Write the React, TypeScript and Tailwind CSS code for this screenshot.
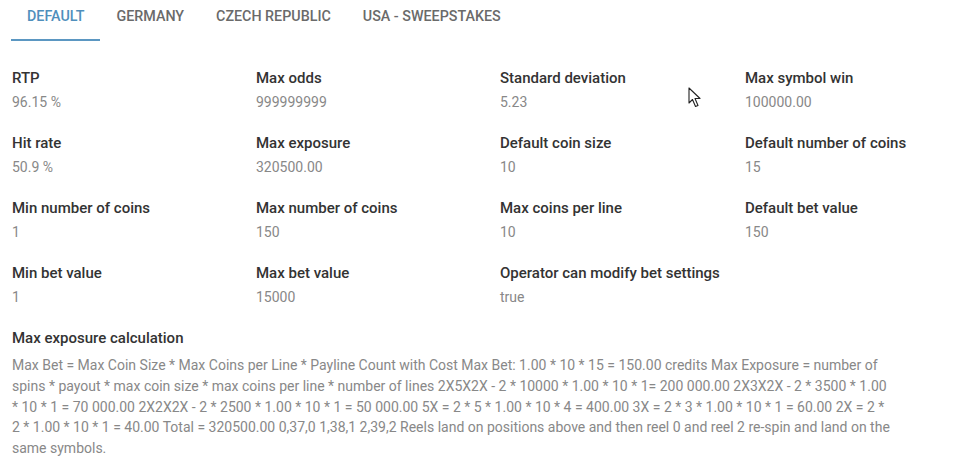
import React from 'react';

const tabs = ['Default', 'Germany', 'Czech Republic', 'USA - Sweepstakes'];

const stats: { label: string; value: string }[] = [
  { label: 'RTP', value: '96.15 %' },
  { label: 'Max odds', value: '999999999' },
  { label: 'Standard deviation', value: '5.23' },
  { label: 'Max symbol win', value: '100000.00' },
  { label: 'Hit rate', value: '50.9 %' },
  { label: 'Max exposure', value: '320500.00' },
  { label: 'Default coin size', value: '10' },
  { label: 'Default number of coins', value: '15' },
  { label: 'Min number of coins', value: '1' },
  { label: 'Max number of coins', value: '150' },
  { label: 'Max coins per line', value: '10' },
  { label: 'Default bet value', value: '150' },
  { label: 'Min bet value', value: '1' },
  { label: 'Max bet value', value: '15000' },
  { label: 'Operator can modify bet settings', value: 'true' },
];

const calc =
  'Max Bet = Max Coin Size * Max Coins per Line * Payline Count with Cost Max Bet: 1.00 * 10 * 15 = 150.00 credits Max Exposure = number of spins * payout * max coin size * max coins per line * number of lines 2X5X2X - 2 * 10000 * 1.00 * 10 * 1= 200 000.00 2X3X2X - 2 * 3500 * 1.00 * 10 * 1 = 70 000.00 2X2X2X - 2 * 2500 * 1.00 * 10 * 1 = 50 000.00 5X = 2 * 5 * 1.00 * 10 * 4 = 400.00 3X = 2 * 3 * 1.00 * 10 * 1 = 60.00 2X = 2 * 2 * 1.00 * 10 * 1 = 40.00 Total = 320500.00 0,37,0 1,38,1 2,39,2 Reels land on positions above and then reel 0 and reel 2 re-spin and land on the same symbols.';

const Cursor = () => (
  <svg className="absolute left-[688px] top-[87px]" width="16" height="22" viewBox="0 0 16 22">
    <path d="M1 1 L1 16 L4.5 12.5 L7.5 19.5 L10 18.5 L7 11.5 L12 11.5 Z" fill="#fff" stroke="#222" strokeWidth="1.1" strokeLinejoin="round" />
  </svg>
);

export default function App() {
  return (
    <div className="relative w-[966px] h-[461px] overflow-hidden bg-white font-['Roboto',sans-serif]">
      <div className="flex px-[11px]">
        {tabs.map((t, i) => (
          <div
            key={t}
            className={
              i === 0
                ? 'px-4 pt-[6px] pb-[13px] leading-5 text-[14.3px] font-medium uppercase text-[#4f8fbc] border-b-2 border-[#5b97c2]'
                : 'px-4 pt-[6px] pb-[13px] leading-5 text-[14.3px] font-medium uppercase text-[#6a6a6a] border-b-2 border-transparent'
            }
          >
            {t}
          </div>
        ))}
      </div>

      <div className="px-3 pt-[27px]">
        <div className="grid grid-cols-[244px_244px_245px_244px]">
          {stats.map((s) => (
            <div key={s.label} className="pb-[21px]">
              <div className="text-[15px] leading-5 font-medium text-[#333]">{s.label}</div>
              <div className="mt-1 text-[14px] leading-5 text-[#888]">{s.value}</div>
            </div>
          ))}
        </div>

        <div className="text-[15px] leading-5 font-medium text-[#333]">Max exposure calculation</div>
        <p className="mt-[7px] w-[880px] text-[14px] leading-[20.75px] text-[#888]">{calc}</p>
      </div>

      <Cursor />
    </div>
  );
}
